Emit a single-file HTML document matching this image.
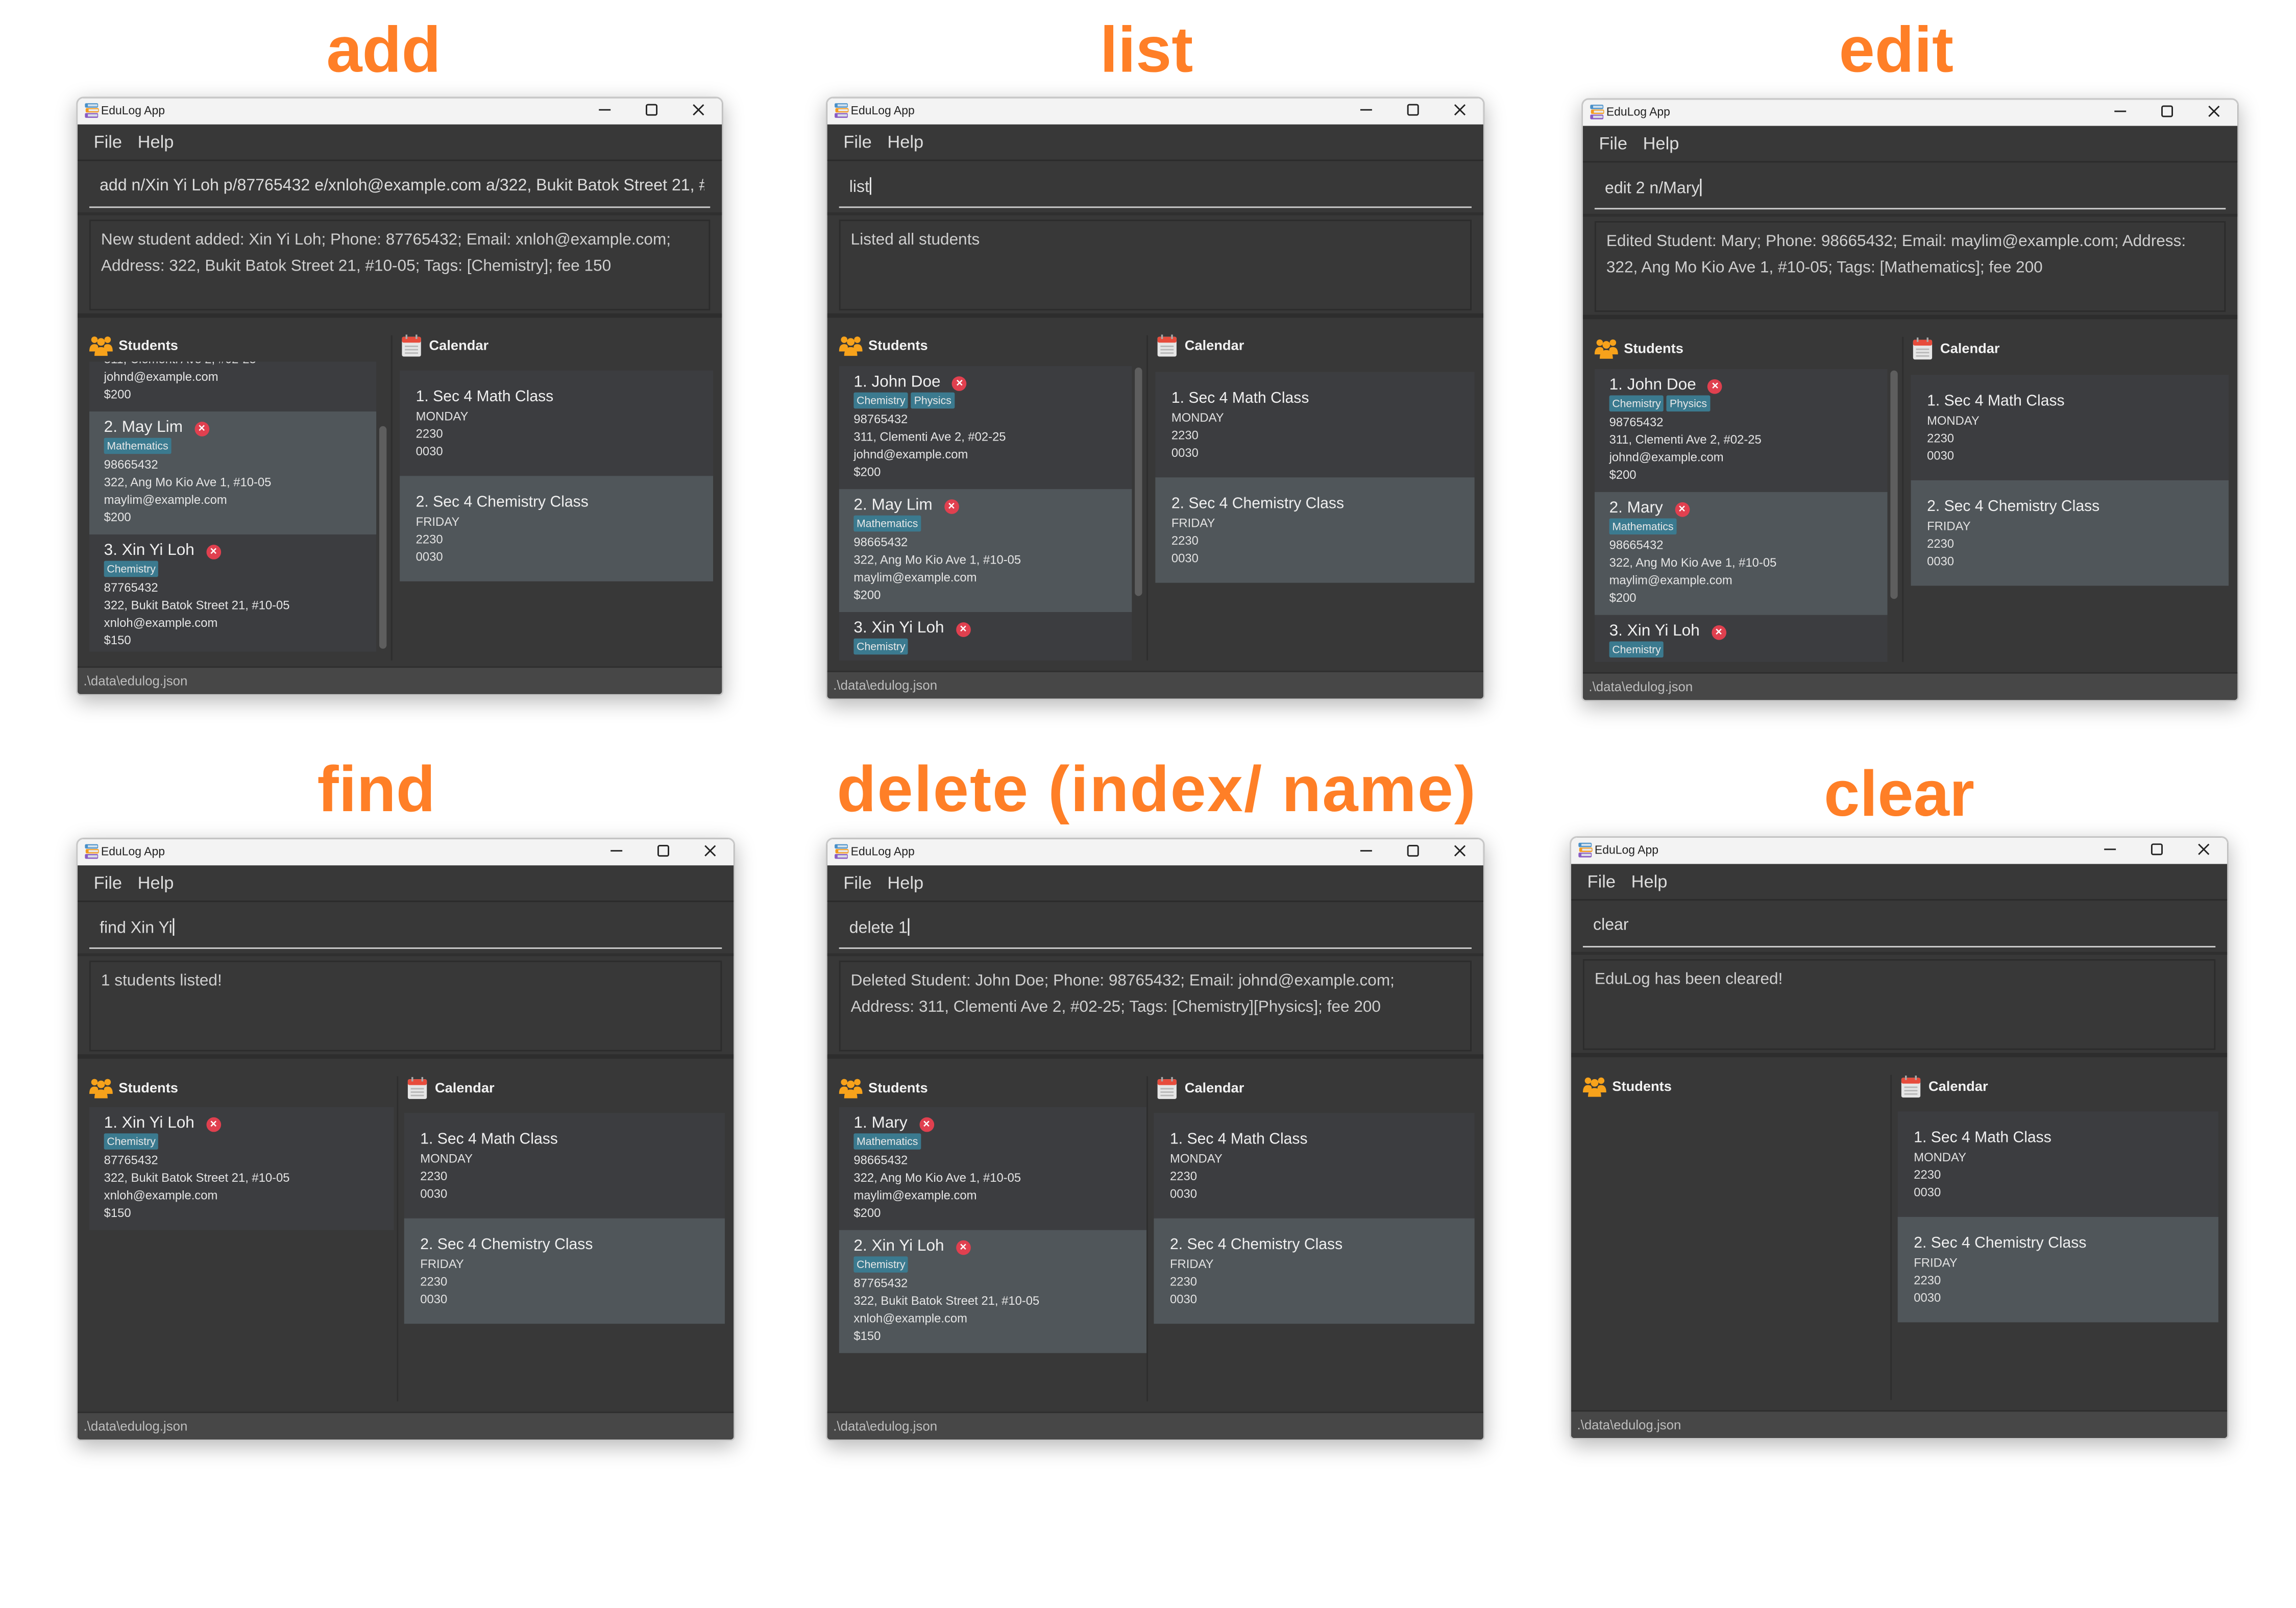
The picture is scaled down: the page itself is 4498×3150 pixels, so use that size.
<!DOCTYPE html>
<html><head><meta charset="utf-8">
<style>
*{margin:0;padding:0;box-sizing:border-box}
html,body{width:4498px;height:3150px;background:#fff;overflow:hidden}
#root{position:absolute;left:0;top:0;width:1568px;height:1098px;transform:scale(2.8686);transform-origin:0 0;font-family:"Liberation Sans","DejaVu Sans",sans-serif}
.lbl{position:absolute;color:#ff7f27;font-weight:bold;font-size:44px;text-align:center;width:600px;line-height:1}
.win{position:absolute;background:#383838;border-radius:5px 5px 3px 3px;overflow:hidden;box-shadow:0 4px 14px rgba(0,0,0,.28);border:1px solid #c8c8c8}
.tb{position:absolute;left:0;right:0;top:0;height:18px;background:#f3f3f3;color:#222;font-size:8px}
.tb .t{position:absolute;left:16px;top:4px}
.tb .ic{position:absolute;left:4px;top:3px;width:11px;height:11px}
.tb .c{position:absolute;top:3px;width:10px;height:10px}
.mb{position:absolute;left:0;right:0;top:18px;height:25px;background:#383838;color:#ddd;font-size:12px;border-bottom:1px solid #2b2b2b}
.mb span{position:absolute;top:5px}
.cmd{position:absolute;left:0;right:0;top:44px;height:36px;background:#383838;border-bottom:2px solid #2f2f2f}
.cmd .tx{position:absolute;left:15px;right:12px;top:10px;color:#dcdcdc;font-size:11.2px;white-space:nowrap;overflow:hidden}
.cmd .ul{position:absolute;left:8px;right:8px;top:30px;height:1px;background:#cfcfcf}
.cur{display:inline-block;width:1px;height:12px;background:#eee;vertical-align:-2px}
.res{position:absolute;left:8px;right:8px;top:83px;height:62px;background:#383838;border:1px solid #2c2c2c;color:#cfcfcf;font-size:11px;line-height:18px;padding:4px 7px}
.sep{position:absolute;left:0;right:0;top:147px;height:3px;background:#2d2d2d}
.hd{position:absolute;top:163px;color:#f2f2f2;font-weight:bold;font-size:9.5px}
.list{position:absolute;left:8px;top:180px;height:204px;overflow:hidden}
.card{position:relative;height:84px;background:#3c3d40;padding:4px 10px;color:#e6e6e6;font-size:8.3px;line-height:12px}
.card.sel{background:#50565a}
.card .nm{font-size:11px;line-height:14px;color:#f0f0f0}
.x{display:inline-block;width:10px;height:10px;border-radius:50%;background:#e0404f;color:#fff;font-size:8px;line-height:10px;text-align:center;font-weight:bold;margin-left:8px;vertical-align:0}
.tag{display:inline-block;background:#3b7a8f;color:#e8e8e8;font-size:7.4px;line-height:11px;padding:0 2px;margin:0 2px 0 0;border-radius:1px;vertical-align:top}
.vd{position:absolute;top:162px;height:222px;width:1px;background:#2e2e2e}
.sb{position:absolute;width:5px;background:#5e5e5e;border-radius:3px}
.cal{position:absolute;top:186px;height:144px}
.cc{height:72px;background:#3c3d40;padding:11px 11px;color:#e2e2e2;font-size:8.3px;line-height:12px}
.cc.sel{background:#50565a}
.cc .nm{font-size:10.5px;line-height:14px;color:#f0f0f0}
.st{position:absolute;left:0;right:0;bottom:0;height:19px;background:#474747;border-top:1px solid #2e2e2e;color:#bdbdbd;font-size:9px;padding:4px 4px}
.ico{position:absolute;width:16px;height:16px}
</style></head><body><div id="root">

<div class="lbl" style="left:-38px;top:13px">add</div>
<div class="lbl" style="left:483px;top:13px">list</div>
<div class="lbl" style="left:995px;top:13px">edit</div>
<div class="lbl" style="left:-43px;top:518px">find</div>
<div class="lbl" style="left:490px;top:518px;letter-spacing:0.7px">delete (index/ name)</div>
<div class="lbl" style="left:997px;top:521px">clear</div>

<svg width="0" height="0" style="position:absolute">
<defs>
<g id="books"><rect x="1" y="0.5" width="9" height="3" rx="0.8" fill="#4a90c8"/><rect x="1.5" y="3.8" width="9" height="3" rx="0.8" fill="#f39a1e"/><rect x="1" y="7.2" width="9" height="3.3" rx="0.8" fill="#8a5cc2"/><rect x="3" y="1.2" width="6.5" height="1.5" fill="#cfe0ee"/><rect x="3.5" y="4.5" width="6.5" height="1.5" fill="#e8e8e8"/><rect x="3" y="8" width="6.5" height="1.6" fill="#d8dde6"/></g>
<g id="ppl" fill="#f7a21b"><circle cx="3.5" cy="4" r="2.2"/><circle cx="12.5" cy="4" r="2.2"/><circle cx="8" cy="5.5" r="2.6"/><path d="M0 12 Q0 7 3.5 7 Q6 7 6 9 L6 12Z"/><path d="M16 12 Q16 7 12.5 7 Q10 7 10 9 L10 12Z"/><path d="M3.5 15 Q3.5 9 8 9 Q12.5 9 12.5 15Z"/></g>
<g id="calc"><rect x="1.5" y="2" width="13" height="13.5" rx="1.2" fill="#e6e6e6"/><rect x="1.5" y="2" width="13" height="4" rx="1.2" fill="#e74c3c"/><rect x="4" y="0.5" width="1.2" height="3" fill="#aaa"/><rect x="10.8" y="0.5" width="1.2" height="3" fill="#aaa"/><g fill="#b8b8b8"><rect x="3.5" y="8" width="9" height="1"/><rect x="3.5" y="10.3" width="9" height="1"/><rect x="3.5" y="12.6" width="9" height="1"/></g></g>
</defs></svg>

<!-- 1 add -->
<div class="win" style="left:52px;top:66px;width:442px;height:409px">
 <div class="tb"><svg class="ic" viewBox="0 0 11 11"><use href="#books"/></svg><span class="t">EduLog App</span>
  <svg class="c" style="right:75px" viewBox="0 0 10 10"><path d="M1 5h8" stroke="#222" stroke-width="1"/></svg>
  <svg class="c" style="right:43px" viewBox="0 0 10 10"><rect x="1.5" y="1.5" width="7" height="7" rx="1" fill="none" stroke="#222" stroke-width="1"/></svg>
  <svg class="c" style="right:11px" viewBox="0 0 10 10"><path d="M1.5 1.5l7 7M8.5 1.5l-7 7" stroke="#222" stroke-width="1"/></svg></div>
 <div class="mb"><span style="left:11px">File</span><span style="left:41px">Help</span></div>
 <div class="cmd"><div class="tx">add n/Xin Yi Loh p/87765432 e/xnloh@example.com a/322, Bukit Batok Street 21, #10-05 t/Chemistry</div><div class="ul"></div></div>
 <div class="res">New student added: Xin Yi Loh; Phone: 87765432; Email: xnloh@example.com;<br>Address: 322, Bukit Batok Street 21, #10-05; Tags: [Chemistry]; fee 150</div>
 <div class="sep"></div>
 <svg class="ico" style="left:8px;top:161px" viewBox="0 0 16 16"><use href="#ppl"/></svg><div class="hd" style="left:28px;top:164px">Students</div>
 <svg class="ico" style="left:220px;top:161px" viewBox="0 0 16 16"><use href="#calc"/></svg><div class="hd" style="left:240px;top:164px">Calendar</div>
 <div class="list" style="width:196px;height:198px"><div style="position:relative;top:-50px">
  <div class="card"><div class="nm">1. John Doe<span class="x">×</span></div><span class="tag">Chemistry</span><span class="tag">Physics</span><br>98765432<br>311, Clementi Ave 2, #02-25<br>johnd@example.com<br>$200</div>
  <div class="card sel"><div class="nm">2. May Lim<span class="x">×</span></div><span class="tag">Mathematics</span><br>98665432<br>322, Ang Mo Kio Ave 1, #10-05<br>maylim@example.com<br>$200</div>
  <div class="card"><div class="nm">3. Xin Yi Loh<span class="x">×</span></div><span class="tag">Chemistry</span><br>87765432<br>322, Bukit Batok Street 21, #10-05<br>xnloh@example.com<br>$150</div>
 </div></div>
 <div class="sb" style="left:206px;top:224px;height:152px"></div>
 <div class="vd" style="left:214px"></div>
 <div class="cal" style="left:220px;width:214px"><div class="cc"><div class="nm">1. Sec 4 Math Class</div>MONDAY<br>2230<br>0030</div><div class="cc sel"><div class="nm">2. Sec 4 Chemistry Class</div>FRIDAY<br>2230<br>0030</div></div>
 <div class="st">.\data\edulog.json</div>
</div>

<!-- 2 list -->
<div class="win" style="left:564px;top:66px;width:450px;height:412px">
 <div class="tb"><svg class="ic" viewBox="0 0 11 11"><use href="#books"/></svg><span class="t">EduLog App</span>
  <svg class="c" style="right:75px" viewBox="0 0 10 10"><path d="M1 5h8" stroke="#222" stroke-width="1"/></svg>
  <svg class="c" style="right:43px" viewBox="0 0 10 10"><rect x="1.5" y="1.5" width="7" height="7" rx="1" fill="none" stroke="#222" stroke-width="1"/></svg>
  <svg class="c" style="right:11px" viewBox="0 0 10 10"><path d="M1.5 1.5l7 7M8.5 1.5l-7 7" stroke="#222" stroke-width="1"/></svg></div>
 <div class="mb"><span style="left:11px">File</span><span style="left:41px">Help</span></div>
 <div class="cmd"><div class="tx">list<span class="cur"></span></div><div class="ul"></div></div>
 <div class="res">Listed all students</div>
 <div class="sep"></div>
 <svg class="ico" style="left:8px;top:161px" viewBox="0 0 16 16"><use href="#ppl"/></svg><div class="hd" style="left:28px;top:164px">Students</div>
 <svg class="ico" style="left:224px;top:161px" viewBox="0 0 16 16"><use href="#calc"/></svg><div class="hd" style="left:244px;top:164px">Calendar</div>
 <div class="list" style="width:200px;top:183px;height:201px"><div>
  <div class="card"><div class="nm">1. John Doe<span class="x">×</span></div><span class="tag">Chemistry</span><span class="tag">Physics</span><br>98765432<br>311, Clementi Ave 2, #02-25<br>johnd@example.com<br>$200</div>
  <div class="card sel"><div class="nm">2. May Lim<span class="x">×</span></div><span class="tag">Mathematics</span><br>98665432<br>322, Ang Mo Kio Ave 1, #10-05<br>maylim@example.com<br>$200</div>
  <div class="card"><div class="nm">3. Xin Yi Loh<span class="x">×</span></div><span class="tag">Chemistry</span><br>87765432<br>322, Bukit Batok Street 21, #10-05<br>xnloh@example.com<br>$150</div>
 </div></div>
 <div class="sb" style="left:210px;top:184px;height:156px"></div>
 <div class="vd" style="left:218px"></div>
 <div class="cal" style="left:224px;width:218px;top:187px"><div class="cc"><div class="nm">1. Sec 4 Math Class</div>MONDAY<br>2230<br>0030</div><div class="cc sel"><div class="nm">2. Sec 4 Chemistry Class</div>FRIDAY<br>2230<br>0030</div></div>
 <div class="st">.\data\edulog.json</div>
</div>

<!-- 3 edit -->
<div class="win" style="left:1080px;top:67px;width:449px;height:412px">
 <div class="tb"><svg class="ic" viewBox="0 0 11 11"><use href="#books"/></svg><span class="t">EduLog App</span>
  <svg class="c" style="right:75px" viewBox="0 0 10 10"><path d="M1 5h8" stroke="#222" stroke-width="1"/></svg>
  <svg class="c" style="right:43px" viewBox="0 0 10 10"><rect x="1.5" y="1.5" width="7" height="7" rx="1" fill="none" stroke="#222" stroke-width="1"/></svg>
  <svg class="c" style="right:11px" viewBox="0 0 10 10"><path d="M1.5 1.5l7 7M8.5 1.5l-7 7" stroke="#222" stroke-width="1"/></svg></div>
 <div class="mb"><span style="left:11px">File</span><span style="left:41px">Help</span></div>
 <div class="cmd"><div class="tx">edit 2 n/Mary<span class="cur"></span></div><div class="ul"></div></div>
 <div class="res">Edited Student: Mary; Phone: 98665432; Email: maylim@example.com; Address:<br>322, Ang Mo Kio Ave 1, #10-05; Tags: [Mathematics]; fee 200</div>
 <div class="sep"></div>
 <svg class="ico" style="left:8px;top:162px" viewBox="0 0 16 16"><use href="#ppl"/></svg><div class="hd" style="left:28px;top:165px">Students</div>
 <svg class="ico" style="left:224px;top:162px" viewBox="0 0 16 16"><use href="#calc"/></svg><div class="hd" style="left:244px;top:165px">Calendar</div>
 <div class="list" style="width:200px;top:184px;height:200px"><div>
  <div class="card"><div class="nm">1. John Doe<span class="x">×</span></div><span class="tag">Chemistry</span><span class="tag">Physics</span><br>98765432<br>311, Clementi Ave 2, #02-25<br>johnd@example.com<br>$200</div>
  <div class="card sel"><div class="nm">2. Mary<span class="x">×</span></div><span class="tag">Mathematics</span><br>98665432<br>322, Ang Mo Kio Ave 1, #10-05<br>maylim@example.com<br>$200</div>
  <div class="card"><div class="nm">3. Xin Yi Loh<span class="x">×</span></div><span class="tag">Chemistry</span><br>87765432<br>322, Bukit Batok Street 21, #10-05<br>xnloh@example.com<br>$150</div>
 </div></div>
 <div class="sb" style="left:210px;top:185px;height:156px"></div>
 <div class="vd" style="left:218px"></div>
 <div class="cal" style="left:224px;width:217px;top:188px"><div class="cc"><div class="nm">1. Sec 4 Math Class</div>MONDAY<br>2230<br>0030</div><div class="cc sel"><div class="nm">2. Sec 4 Chemistry Class</div>FRIDAY<br>2230<br>0030</div></div>
 <div class="st">.\data\edulog.json</div>
</div>

<!-- 4 find -->
<div class="win" style="left:52px;top:572px;width:450px;height:412px">
 <div class="tb"><svg class="ic" viewBox="0 0 11 11"><use href="#books"/></svg><span class="t">EduLog App</span>
  <svg class="c" style="right:75px" viewBox="0 0 10 10"><path d="M1 5h8" stroke="#222" stroke-width="1"/></svg>
  <svg class="c" style="right:43px" viewBox="0 0 10 10"><rect x="1.5" y="1.5" width="7" height="7" rx="1" fill="none" stroke="#222" stroke-width="1"/></svg>
  <svg class="c" style="right:11px" viewBox="0 0 10 10"><path d="M1.5 1.5l7 7M8.5 1.5l-7 7" stroke="#222" stroke-width="1"/></svg></div>
 <div class="mb"><span style="left:11px">File</span><span style="left:41px">Help</span></div>
 <div class="cmd"><div class="tx">find Xin Yi<span class="cur"></span></div><div class="ul"></div></div>
 <div class="res">1 students listed!</div>
 <div class="sep"></div>
 <svg class="ico" style="left:8px;top:162px" viewBox="0 0 16 16"><use href="#ppl"/></svg><div class="hd" style="left:28px;top:165px">Students</div>
 <svg class="ico" style="left:224px;top:162px" viewBox="0 0 16 16"><use href="#calc"/></svg><div class="hd" style="left:244px;top:165px">Calendar</div>
 <div class="list" style="width:208px;top:183px;height:201px"><div>
  <div class="card"><div class="nm">1. Xin Yi Loh<span class="x">×</span></div><span class="tag">Chemistry</span><br>87765432<br>322, Bukit Batok Street 21, #10-05<br>xnloh@example.com<br>$150</div>
 </div></div>
 <div class="vd" style="left:218px"></div>
 <div class="cal" style="left:223px;width:219px;top:187px"><div class="cc"><div class="nm">1. Sec 4 Math Class</div>MONDAY<br>2230<br>0030</div><div class="cc sel"><div class="nm">2. Sec 4 Chemistry Class</div>FRIDAY<br>2230<br>0030</div></div>
 <div class="st">.\data\edulog.json</div>
</div>

<!-- 5 delete -->
<div class="win" style="left:564px;top:572px;width:450px;height:412px">
 <div class="tb"><svg class="ic" viewBox="0 0 11 11"><use href="#books"/></svg><span class="t">EduLog App</span>
  <svg class="c" style="right:75px" viewBox="0 0 10 10"><path d="M1 5h8" stroke="#222" stroke-width="1"/></svg>
  <svg class="c" style="right:43px" viewBox="0 0 10 10"><rect x="1.5" y="1.5" width="7" height="7" rx="1" fill="none" stroke="#222" stroke-width="1"/></svg>
  <svg class="c" style="right:11px" viewBox="0 0 10 10"><path d="M1.5 1.5l7 7M8.5 1.5l-7 7" stroke="#222" stroke-width="1"/></svg></div>
 <div class="mb"><span style="left:11px">File</span><span style="left:41px">Help</span></div>
 <div class="cmd"><div class="tx">delete 1<span class="cur"></span></div><div class="ul"></div></div>
 <div class="res">Deleted Student: John Doe; Phone: 98765432; Email: johnd@example.com;<br>Address: 311, Clementi Ave 2, #02-25; Tags: [Chemistry][Physics]; fee 200</div>
 <div class="sep"></div>
 <svg class="ico" style="left:8px;top:162px" viewBox="0 0 16 16"><use href="#ppl"/></svg><div class="hd" style="left:28px;top:165px">Students</div>
 <svg class="ico" style="left:224px;top:162px" viewBox="0 0 16 16"><use href="#calc"/></svg><div class="hd" style="left:244px;top:165px">Calendar</div>
 <div class="list" style="width:210px;top:183px;height:201px"><div>
  <div class="card"><div class="nm">1. Mary<span class="x">×</span></div><span class="tag">Mathematics</span><br>98665432<br>322, Ang Mo Kio Ave 1, #10-05<br>maylim@example.com<br>$200</div>
  <div class="card sel"><div class="nm">2. Xin Yi Loh<span class="x">×</span></div><span class="tag">Chemistry</span><br>87765432<br>322, Bukit Batok Street 21, #10-05<br>xnloh@example.com<br>$150</div>
 </div></div>
 <div class="vd" style="left:218px"></div>
 <div class="cal" style="left:223px;width:219px;top:187px"><div class="cc"><div class="nm">1. Sec 4 Math Class</div>MONDAY<br>2230<br>0030</div><div class="cc sel"><div class="nm">2. Sec 4 Chemistry Class</div>FRIDAY<br>2230<br>0030</div></div>
 <div class="st">.\data\edulog.json</div>
</div>

<!-- 6 clear -->
<div class="win" style="left:1072px;top:571px;width:450px;height:412px">
 <div class="tb"><svg class="ic" viewBox="0 0 11 11"><use href="#books"/></svg><span class="t">EduLog App</span>
  <svg class="c" style="right:75px" viewBox="0 0 10 10"><path d="M1 5h8" stroke="#222" stroke-width="1"/></svg>
  <svg class="c" style="right:43px" viewBox="0 0 10 10"><rect x="1.5" y="1.5" width="7" height="7" rx="1" fill="none" stroke="#222" stroke-width="1"/></svg>
  <svg class="c" style="right:11px" viewBox="0 0 10 10"><path d="M1.5 1.5l7 7M8.5 1.5l-7 7" stroke="#222" stroke-width="1"/></svg></div>
 <div class="mb"><span style="left:11px">File</span><span style="left:41px">Help</span></div>
 <div class="cmd"><div class="tx">clear</div><div class="ul"></div></div>
 <div class="res">EduLog has been cleared!</div>
 <div class="sep"></div>
 <svg class="ico" style="left:8px;top:162px" viewBox="0 0 16 16"><use href="#ppl"/></svg><div class="hd" style="left:28px;top:165px">Students</div>
 <svg class="ico" style="left:224px;top:162px" viewBox="0 0 16 16"><use href="#calc"/></svg><div class="hd" style="left:244px;top:165px">Calendar</div>
 <div class="vd" style="left:218px"></div>
 <div class="cal" style="left:223px;width:219px;top:187px"><div class="cc"><div class="nm">1. Sec 4 Math Class</div>MONDAY<br>2230<br>0030</div><div class="cc sel"><div class="nm">2. Sec 4 Chemistry Class</div>FRIDAY<br>2230<br>0030</div></div>
 <div class="st">.\data\edulog.json</div>
</div>

</div></body></html>
